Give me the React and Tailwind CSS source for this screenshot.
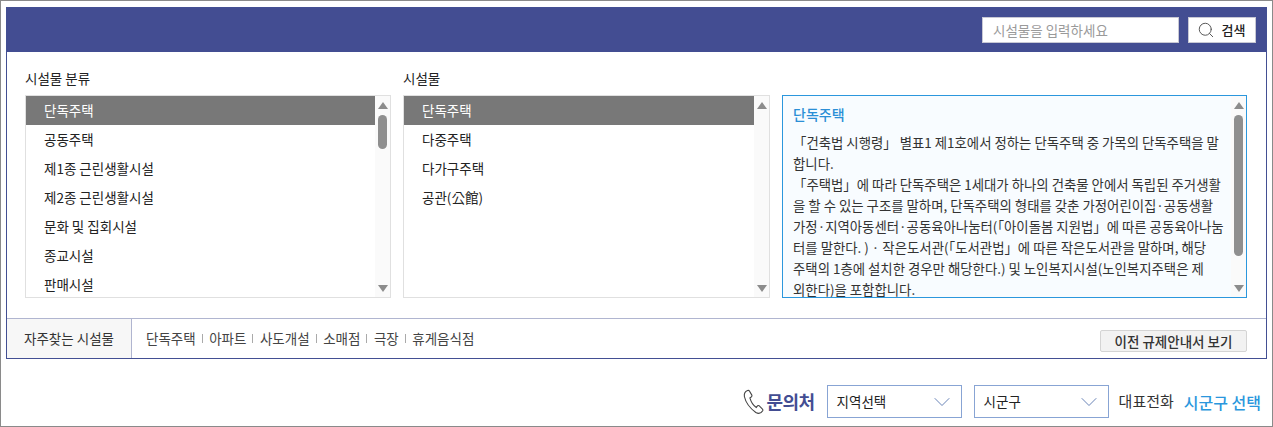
import { Search, ChevronDown } from 'lucide-react';

const categories = ['단독주택', '공동주택', '제1종 근린생활시설', '제2종 근린생활시설', '문화 및 집회시설', '종교시설', '판매시설'];
const facilities = ['단독주택', '다중주택', '다가구주택', '공관(公館)'];
const frequent = ['단독주택', '아파트', '사도개설', '소매점', '극장', '휴게음식점'];
const description = [
  '「건축법 시행령」 별표1 제1호에서 정하는 단독주택 중 가목의 단독주택을 말',
  '합니다.',
  '「주택법」에 따라 단독주택은 1세대가 하나의 건축물 안에서 독립된 주거생활',
  '을 할 수 있는 구조를 말하며, 단독주택의 형태를 갖춘 가정어린이집·공동생활',
  '가정·지역아동센터·공동육아나눔터(「아이돌봄 지원법」에 따른 공동육아나눔',
  '터를 말한다. ) · 작은도서관(「도서관법」에 따른 작은도서관을 말하며, 해당',
  '주택의 1층에 설치한 경우만 해당한다.) 및 노인복지시설(노인복지주택은 제',
  '외한다)을 포함합니다.',
];

function Scrollbar({ thumb }) {
  return (
    <div className="flex h-full w-[15px] shrink-0 flex-col items-center bg-[#fafafa] pt-[6px] pb-[5px]">
      <div className="h-0 w-0 border-x-[5px] border-b-[7px] border-x-transparent border-b-[#8c8c8c]" />
      <div className={`mt-[6px] w-[9px] rounded-full bg-[#8f8f8f] ${thumb}`} />
      <div className="mt-auto h-0 w-0 border-x-[5px] border-t-[7px] border-x-transparent border-t-[#8c8c8c]" />
    </div>
  );
}

function ListBox({ items, thumb }) {
  return (
    <div className="flex h-[203px] overflow-hidden border border-[#e0e0e0] bg-white">
      <ul className="min-w-0 flex-1">
        {items.map((item, i) => (
          <li
            key={item}
            className={`h-[29px] pl-[18px] text-[13.5px] leading-[29px] ${i === 0 ? 'bg-[#787878] text-white' : 'text-[#222]'}`}
          >
            {item}
          </li>
        ))}
      </ul>
      <Scrollbar thumb={thumb} />
    </div>
  );
}

export default function App() {
  return (
    <div className="h-[427px] w-[1273px] border border-[#8a8a8a] bg-white px-[5px] pt-[6px] font-['Noto_Sans_CJK_KR','Noto_Sans',sans-serif] text-[13px]">
      <section className="h-[352px] w-[1261px] border border-[#434f93]">
        <header className="flex h-[44px] items-center justify-end gap-[9px] bg-[#434d92] pr-[10px]">
          <input
            readOnly
            placeholder="시설물을 입력하세요"
            className="h-[26px] w-[197px] border border-[#c8c8d4] bg-white px-[10px] text-[13.5px] placeholder:text-[#9a9a9a]"
          />
          <button className="flex h-[26px] w-[68px] items-center justify-center gap-[7px] border border-[#c8c8d4] bg-white pr-[2px] text-[13px] font-medium text-[#222]">
            <Search className="h-[18px] w-[18px] text-[#555]" strokeWidth={1.3} />
            검색
          </button>
        </header>

        <div className="flex h-[266px] gap-[12px] pl-[18px] pt-[16px]">
          <div className="w-[366px]">
            <h3 className="mb-[7px] h-[20px] text-[13.5px] leading-[20px] text-[#222]">시설물 분류</h3>
            <ListBox items={categories} thumb="h-[34px]" />
          </div>
          <div className="w-[367px]">
            <h3 className="mb-[7px] h-[20px] text-[13.5px] leading-[20px] text-[#222]">시설물</h3>
            <ListBox items={facilities} thumb="hidden" />
          </div>
          <div className="w-[465px] pt-[27px]">
            <div className="flex h-[203px] overflow-hidden border border-[#2b97dd] bg-[#f8fcff]">
              <div className="min-w-0 flex-1 pl-[10px] pt-[8px]">
                <h4 className="mb-[8px] text-[14px] font-medium leading-[20px] text-[#2b8fd6]">단독주택</h4>
                {description.map(line => (
                  <p key={line} className="whitespace-nowrap text-[13.4px] leading-[21px] text-[#333]">{line}</p>
                ))}
              </div>
              <Scrollbar thumb="h-[141px]" />
            </div>
          </div>
        </div>

        <div className="flex h-[40px] items-center border-t border-[#b0b5d0]">
          <div className="flex h-full w-[125px] items-center justify-center border-r border-[#b0b5d0] bg-[#f7f7f7] text-[13.5px] text-[#333]">
            자주찾는 시설물
          </div>
          <ul className="flex items-center pl-[14px] text-[13.5px] text-[#444]">
            {frequent.map((item, i) => (
              <li key={item} className="flex items-center">
                {i > 0 && <span className="ml-[6px] mr-[6.5px] h-[9px] w-px bg-[#aaa]" />}
                {item}
              </li>
            ))}
          </ul>
          <button className="mb-[-5px] ml-auto mr-[19px] h-[22px] w-[147px] rounded-[2px] border border-[#d4d4d4] bg-[#f2f2f2] text-[13.5px] font-medium text-[#333]">
            이전 규제안내서 보기
          </button>
        </div>
      </section>

      <footer className="mt-[26px] flex h-[33px] items-center justify-end pr-[6px]">
        <svg viewBox="0 0 24 28" className="h-[28px] w-[22px] text-[#444]" fill="none" stroke="currentColor" strokeWidth="1.2">
          <path d="M5 1.5 C2.5 2.5 1 4.5 1.5 8 C3 15 8 21 14 25.5 C17 27 20 26 21.5 23.5 C22 22.5 21.5 22 21 21.5 L17.5 18 C16.5 17.5 16 17.7 15.5 18.5 L14.5 20 C11.5 18 8.5 13 7.5 9.5 L9 8.5 C9.8 8 10 7 9.5 6.2 L7 2 C6.5 1.2 5.8 1.2 5 1.5 Z" />
        </svg>
        <strong className="ml-px text-[18px] font-bold tracking-[-0.5px] text-[#434d92]">문의처</strong>
        <div className="ml-[12px] flex h-[33px] w-[135px] items-center justify-between border border-[#88a4d4] pl-[9px] pr-[5px] text-[13.5px] text-[#222]">
          지역선택
          <ChevronDown className="h-[28px] w-[28px] text-[#5c7ab0]" strokeWidth={0.8} />
        </div>
        <div className="ml-[12px] flex h-[33px] w-[135px] items-center justify-between border border-[#88a4d4] pl-[9px] pr-[5px] text-[13.5px] text-[#222]">
          시군구
          <ChevronDown className="h-[28px] w-[28px] text-[#5c7ab0]" strokeWidth={0.8} />
        </div>
        <span className="ml-[10px] text-[15px] text-[#333]">대표전화</span>
        <span className="ml-[10px] text-[16px] font-medium text-[#2b97dd]">시군구 선택</span>
      </footer>
    </div>
  );
}
